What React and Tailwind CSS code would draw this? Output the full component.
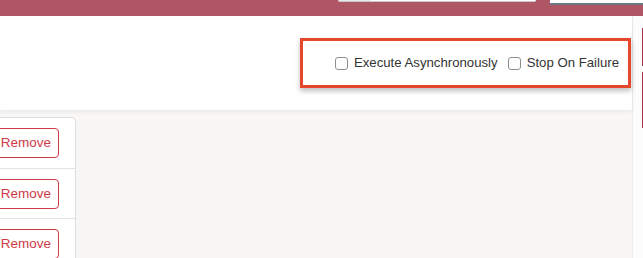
export default function App() {
  const rows = [0, 1, 2];
  return (
    <div className="relative w-[643px] h-[258px] overflow-hidden bg-white font-['Liberation_Sans',Arial,sans-serif]">
      {/* top bar */}
      <div className="h-[16px] bg-[#ae5664] flex items-start">
        <div className="ml-[338px] flex h-[2px] w-[198px]">
          <div className="w-[33px] h-full bg-[#e9e9e9] border-b border-[#c9c9c9] rounded-bl-[2px]" />
          <div className="flex-1 h-full bg-white border-b border-[#c9c9c9] rounded-br-[2px]" />
        </div>
        <div className="ml-[14px] flex-1 h-[5px] bg-white border-b-2 border-[#6b7785]" />
      </div>

      <div className="flex h-[242px]">
        {/* main */}
        <div className="w-[632px] flex flex-col">
          <div className="h-[94px] shrink-0 bg-white relative z-10 shadow-[0_2px_4px_rgba(0,0,0,0.06)] flex justify-end items-start pt-[22px] pr-[1px]">
            <div className="w-[331px] h-[50px] border-[3px] border-[#e5472c] shadow-[0_3px_5px_rgba(0,0,0,0.25)] flex items-center justify-end pr-[9px] text-[13.2px] text-[#333]">
              <span className="w-[13px] h-[13px] rounded-[3px] border border-[#8e8e8e] bg-white" />
              <span className="ml-[6px]">Execute Asynchronously</span>
              <span className="ml-[10px] w-[13px] h-[13px] rounded-[3px] border border-[#8e8e8e] bg-white" />
              <span className="ml-[6px]">Stop On Failure</span>
            </div>
          </div>
          <div className="flex-1 min-h-0 bg-[#f8f7f6] pt-[7px]">
            <div className="ml-[-224px] w-[300px] bg-white border border-[#dedede] rounded-tr-[4px]">
              {rows.map((r) => (
                <div
                  key={r}
                  className={`h-[50px] flex justify-end items-start pt-[10px] pr-[16px] ${r > 0 ? "border-t border-[#e2e2e2]" : ""}`}
                >
                  <button className="h-[30px] w-[66px] rounded-[4px] border border-[#cf3a48] text-[#cf3a48] text-[13.5px] bg-white flex items-center justify-center">
                    Remove
                  </button>
                </div>
              ))}
            </div>
          </div>
        </div>
        {/* right side */}
        <div className="flex-1 border-l border-[#ececec] bg-[#fcfcfc] flex flex-col items-end pt-[12px] gap-[6px]">
          <div className="w-[1px] h-[38px] bg-[#a8344a]" />
          <div className="w-[1px] h-[56px] bg-[#a8344a]" />
        </div>
      </div>
    </div>
  );
}
